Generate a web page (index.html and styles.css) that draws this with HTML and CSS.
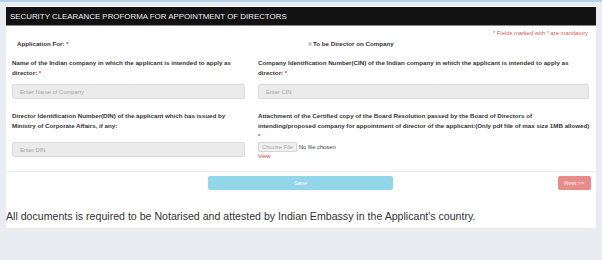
FILE: index.html
```html
<!DOCTYPE html>
<html lang="en">
<head>
    <meta charset="UTF-8">
    <title>Security Clearance Proforma</title>
    <link rel="stylesheet" href="styles.css">
</head>
<body>
<div class="topline"></div>
<div class="panel">
    <div class="panel_head">SECURITY CLEARANCE PROFORMA FOR APPOINTMENT OF DIRECTORS</div>
    <div class="panel_body">
        <p class="note">* Fields marked with * are mandatory</p>
        <div class="row first">
            <div class="col">
                <label class="lbl indent">Application For: <span class="req">*</span></label>
            </div>
            <div class="col">
                <label class="lbl radio_lbl"><span class="radio"></span>To be Director on Company</label>
            </div>
        </div>
        <div class="row second">
            <div class="col">
                <label class="lbl">Name of the Indian company in which the applicant is intended to apply as<br>director: <span class="req">*</span></label>
                <div class="input">Enter Name of Company</div>
            </div>
            <div class="col">
                <label class="lbl">Company Identification Number(CIN) of the Indian company in which the applicant is intended to apply as<br>director: <span class="req">*</span></label>
                <div class="input">Enter CIN</div>
            </div>
        </div>
        <div class="row third">
            <div class="col">
                <label class="lbl">Director Identification Number(DIN) of the applicant which has issued by<br>Ministry of Corporate Affairs, if any:</label>
                <div class="input din">Enter DIN</div>
            </div>
            <div class="col">
                <label class="lbl">Attachment of the Certified copy of the Board Resolution passed by the Board of Directors of<br>intending/proposed company for appointment of director of the applicant:(Only pdf file of max size 1MB allowed)<br><span class="req">*</span></label>
                <div class="file"><span class="file_btn">Choose File</span><span class="file_txt">No file chosen</span></div>
                <a class="view" href="javascript:void(0)">View</a>
            </div>
        </div>
    </div>
    <div class="panel_foot">
        <span class="btn save">Save</span>
        <span class="btn next">Next &gt;&gt;</span>
    </div>
    <p class="notice">All documents is required to be Notarised and attested by Indian Embassy in the Applicant's country.</p>
</div>
</body>
</html>
```

FILE: styles.css
```css
body{
    margin:0;
    background:#e9ecf1;
    font-family:"Liberation Sans",Arial,sans-serif;
    color:#333;
}
.topline{height:2px;background:#b3d2e9;}
.panel{
    margin:4px 6px 0 6px;
    padding-top:1px;
    background:#fff;
    height:221px;
}
.panel_head{
    height:19px;
    line-height:19px;
    background:#121212;
    color:#eee;
    font-size:7.9px;
    padding-left:4px;
    border-bottom:1px solid #888;
    box-sizing:border-box;
}
.panel_body{padding:0 7px 0 6px;}
.note{
    margin:0;
    padding-top:3px;
    height:9px;
    line-height:9px;
    text-align:right;
    font-size:5.8px;
    color:#d0605c;
    padding-right:1px;
}
.row{
    display:grid;
    grid-template-columns:233px 331px;
    column-gap:13px;
}
.row.first{margin-top:1px;}
.row.second{margin-top:9px;}
.row.third{margin-top:12px;}
.lbl{
    display:block;
    font-size:6.2px;
    font-weight:bold;
    line-height:10px;
    color:#333;
    white-space:nowrap;
}
.indent{padding-left:5px;}
.req{color:#d04a45;}
.radio_lbl{display:flex;align-items:center;padding-left:50px;}
.radio{
    display:inline-block;
    width:4px;
    height:4px;
    border-radius:50%;
    background:#ccc;
    margin-right:1px;
}
.input{
    margin-top:6px;
    height:15px;
    line-height:15px;
    box-sizing:border-box;
    background:#ebebeb;
    border:1px solid #dcdcdc;
    border-radius:2px;
    padding-left:7px;
    font-size:5.8px;
    color:#a5a5a5;
}
.input.din{margin-top:11px;}
.file{
    display:flex;
    align-items:center;
    margin-top:1px;
    font-size:5.8px;
}
.file_btn{
    height:10px;
    line-height:9px;
    box-sizing:border-box;
    padding:0 3px;
    border:1px solid #d5d5d5;
    background:#f0f0f0;
    color:#a9a9a9;
    border-radius:1px;
}
.file_txt{margin-left:2px;color:#444;}
.view{
    display:block;
    font-size:5.8px;
    line-height:8px;
    color:#c94a45;
    text-decoration:none;
}
.panel_foot{
    margin-top:11px;
    border-top:1px solid #eee;
    padding:4px 5px 0 202px;
    display:flex;
    justify-content:space-between;
}
.btn{
    height:14px;
    line-height:14px;
    border-radius:2px;
    color:#fff;
    font-size:5.8px;
    text-align:center;
}
.save{width:185px;background:#93d6ea;}
.next{width:33px;background:#e88c89;}
.notice{
    margin:20px 0 0 0;
    font-size:10.6px;
    color:#333;
}
```
